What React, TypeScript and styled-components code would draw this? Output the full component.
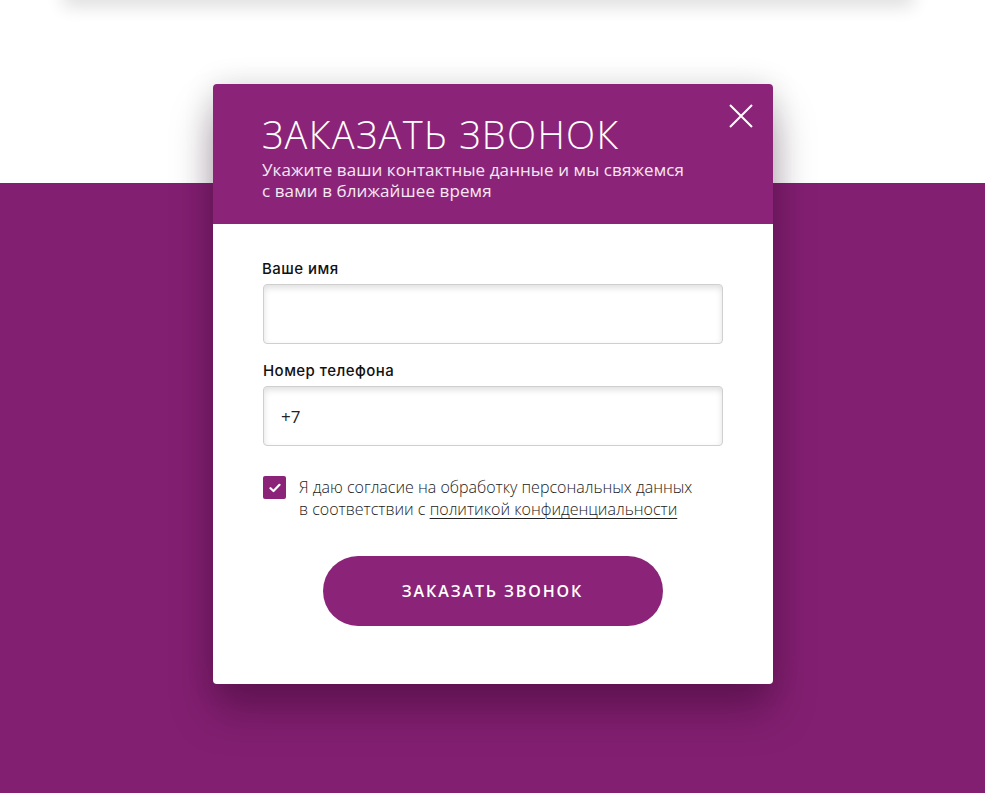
import React from "react";
import styled, { createGlobalStyle } from "styled-components";

const Global = createGlobalStyle`
  html, body { margin: 0; padding: 0; height: 100%; }
  body { font-family: "Open Sans", "Noto Sans", sans-serif; background: #831f71; overflow: hidden; }
  #root { min-height: 100vh; }
`;

const Page = styled.div`
  position: relative;
  min-height: 100vh;
  display: flex;
  flex-direction: column;
`;

const TopSection = styled.section`
  height: 183px;
  background: #ffffff;
  display: flex;
  justify-content: center;
  overflow: hidden;
`;

const TopCard = styled.div`
  width: 850px;
  height: 20px;
  margin-top: -20px;
  margin-left: -10px;
  background: #fff;
  box-shadow: 0 6px 18px rgba(0, 0, 0, 0.14);
`;

const BottomSection = styled.section`
  flex: 1;
  background: #831f71;
`;

const Modal = styled.div`
  position: absolute;
  top: 84px;
  left: 213px;
  width: 560px;
  height: 600px;
  background: #fff;
  border-radius: 4px;
  overflow: hidden;
  box-shadow: 0 28px 40px rgba(40, 0, 35, 0.35), 0 0 30px rgba(0, 0, 0, 0.12);
  display: flex;
  flex-direction: column;
`;

const Header = styled.div`
  position: relative;
  height: 140px;
  box-sizing: border-box;
  background: #8b2479;
  padding: 27px 50px 0 49px;
  color: #fff;
`;

const Title = styled.h2`
  margin: 0;
  font-family: "Open Sans", sans-serif;
  font-weight: 300;
  font-size: 38px;
  line-height: 46px;
  letter-spacing: 1.35px;
`;

const Subtitle = styled.p`
  margin: 2px 0 0;
  font-family: "Open Sans", sans-serif;
  font-weight: 400;
  font-size: 17px;
  line-height: 21px;
  letter-spacing: 0.1px;
  color: #f6e8f3;
`;

const CloseButton = styled.button`
  position: absolute;
  top: 20px;
  right: 20px;
  width: 24px;
  height: 24px;
  padding: 0;
  border: 0;
  background: transparent;
  cursor: pointer;
  display: flex;
  align-items: center;
  justify-content: center;
`;

const Body = styled.form`
  padding: 35px 50px 0 49px;
  display: flex;
  flex-direction: column;
`;

const Label = styled.label<{ $indent?: number }>`
  font-family: "Inter", "Open Sans", sans-serif;
  font-weight: 500;
  font-size: 15px;
  line-height: 20px;
  letter-spacing: 0.45px;
  color: #111;
  margin-bottom: 5px;
  margin-left: ${(p) => p.$indent ?? 0}px;
`;

const Input = styled.input`
  box-sizing: border-box;
  width: 460px;
  height: 60px;
  margin-left: 1px;
  border: 1px solid #cfcfcf;
  border-radius: 4px;
  box-shadow: inset 0 3px 6px rgba(0, 0, 0, 0.13);
  padding: 0 17px;
  font-family: "Open Sans", sans-serif;
  font-size: 17px;
  color: #222;
  outline: none;
  margin-bottom: 17px;
`;

const ConsentRow = styled.div`
  display: flex;
  align-items: flex-start;
  gap: 13px;
  margin-top: 13px;
  margin-left: 1px;
`;

const CheckBox = styled.span`
  flex: none;
  width: 23px;
  height: 23px;
  border-radius: 2px;
  background: #8b2479;
  display: flex;
  align-items: center;
  justify-content: center;
`;

const ConsentText = styled.p`
  margin: 0;
  font-family: "Open Sans", sans-serif;
  font-weight: 300;
  font-size: 16px;
  line-height: 22px;
  color: #222;
`;

const PolicyLink = styled.a`
  color: #222;
  text-decoration: underline;
  text-underline-offset: 3px;
  text-decoration-thickness: 1px;
`;

const SubmitButton = styled.button`
  align-self: center;
  margin-top: 36px;
  width: 340px;
  height: 70px;
  border: 0;
  border-radius: 35px;
  background: #8b2479;
  color: #fff;
  font-family: "Open Sans", sans-serif;
  font-weight: 600;
  font-size: 16px;
  letter-spacing: 1.9px;
  cursor: pointer;
`;

export default function App() {
  return (
    <>
      <Global />
      <Page>
        <TopSection>
          <TopCard />
        </TopSection>
        <BottomSection />
        <Modal>
          <Header>
            <Title>ЗАКАЗАТЬ ЗВОНОК</Title>
            <Subtitle>
              Укажите ваши контактные данные и мы свяжемся
              <br />с вами в ближайшее время
            </Subtitle>
            <CloseButton aria-label="Закрыть" type="button">
              <svg width="24" height="24" viewBox="0 0 24 24">
                <path d="M1 1 L23 23 M23 1 L1 23" stroke="#fff" strokeWidth="2" fill="none" />
              </svg>
            </CloseButton>
          </Header>
          <Body onSubmit={(e) => e.preventDefault()}>
            <Label>Ваше имя</Label>
            <Input type="text" />
            <Label $indent={1}>Номер телефона</Label>
            <Input type="tel" defaultValue="+7" />
            <ConsentRow>
              <CheckBox>
                <svg width="12" height="10" viewBox="0 0 12 10">
                  <path d="M1.5 5.2 L4.5 8 L10.5 1.8" stroke="#fff" strokeWidth="2.2" fill="none" strokeLinecap="round" strokeLinejoin="round" />
                </svg>
              </CheckBox>
              <ConsentText>
                Я даю согласие на обработку персональных данных
                <br />в соответствии с <PolicyLink href="#">политикой конфиденциальности</PolicyLink>
              </ConsentText>
            </ConsentRow>
            <SubmitButton type="submit">ЗАКАЗАТЬ ЗВОНОК</SubmitButton>
          </Body>
        </Modal>
      </Page>
    </>
  );
}
